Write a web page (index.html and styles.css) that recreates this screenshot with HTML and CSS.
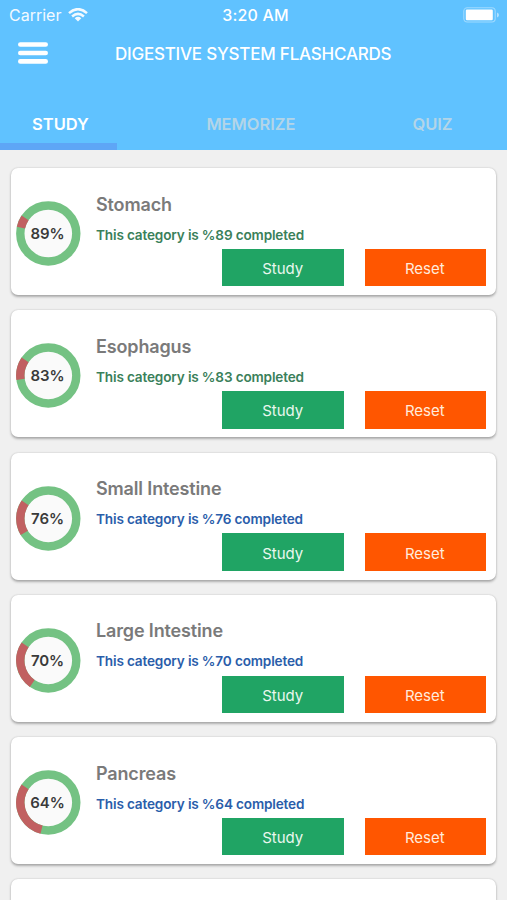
FILE: index.html
```html
<!DOCTYPE html>
<html lang="en">
<head>
<meta charset="utf-8">
<title>Digestive System Flashcards</title>
<link rel="stylesheet" href="styles.css">
</head>
<body>
<header class="header">
  <div class="status">
    <div class="carrier"><span>Carrier</span>
      <svg class="wifi" width="20" height="14" viewBox="0 0 20 14"><g fill="none" stroke="#fff" stroke-width="2.5"><path d="M1 5.1Q10-2.8 19 5.1"/><path d="M4.1 8.5Q10 3.2 15.9 8.5"/></g><path d="M6.7 10.2Q10 7.3 13.3 10.2L10 13.5Z" fill="#fff"/></svg>
    </div>
    <span class="time">3:20 AM</span>
    <svg class="battery" width="37" height="16" viewBox="0 0 37 16"><rect x=".8" y=".8" width="31.4" height="14.2" rx="3.4" fill="none" stroke="#fff" stroke-opacity=".4" stroke-width="1.1"/><rect x="2.8" y="2.6" width="27" height="10.6" rx="1.2" fill="#fff"/><path d="M34 5.5q2 .7 2 2.5t-2 2.5Z" fill="#fff" fill-opacity=".5"/></svg>
  </div>
  <div class="titlebar">
    <svg class="menu" width="30" height="22" viewBox="0 0 30 22"><g stroke="#fff" stroke-width="4.6" stroke-linecap="round"><path d="M2.3 2.5H27.7M2.3 11H27.7M2.3 19.4H27.7"/></g></svg>
    <h1 class="title">DIGESTIVE SYSTEM FLASHCARDS</h1>
  </div>
  <nav class="tabs">
    <span class="tab active">STUDY</span>
    <span class="tab middle">MEMORIZE</span>
    <span class="tab last">QUIZ</span>
  </nav>
</header>
<main class="list" id="list"></main>
<script src="app.js"></script>
</body>
</html>
```
FILE: styles.css
```css
* { box-sizing: border-box; }
body {
  margin: 0;
  height: 900px;
  overflow: hidden;
  background: #f0f0f0;
  font-family: Inter, "Liberation Sans", sans-serif;
}
.header {
  height: 150px;
  background: #60c2ff;
  color: #fff;
  display: flex;
  flex-direction: column;
}
.status {
  height: 30px;
  padding: 0 7px 0 9px;
  display: grid;
  grid-template-columns: 1fr auto 1fr;
  align-items: center;
  font-size: 16px;
  line-height: 30px;
}
.carrier { display: flex; align-items: center; gap: 7px; opacity: .92; }
.wifi { margin-top: -1px; }
.time { font-weight: 500; letter-spacing: .2px; margin-left: 2px; }
.battery { justify-self: end; }
.titlebar {
  height: 46px;
  padding-left: 18px;
  display: flex;
  align-items: center;
}
.title {
  margin: 1px 0 0 67px;
  font-size: 17px;
  line-height: 46px;
  font-weight: 500;
  letter-spacing: -.22px;
}
.tabs {
  flex: 1;
  display: grid;
  grid-template-columns: 117px 268px 95px;
  text-align: center;
  font-size: 16.5px;
  font-weight: 600;
  letter-spacing: 0;
  padding-top: 21px;
}
.tab { line-height: 54px; color: #b3d5e8; height: 53px; }
.active { color: #fff; border-bottom: 7px solid #5ea6f6; padding-left: 4px; }
.list {
  height: 750px;
  overflow: hidden;
  padding: 18px 11px 0;
  display: flex;
  flex-direction: column;
  gap: 15.25px;
}
.card {
  flex: none;
  height: 127px;
  background: #fff;
  border-radius: 7px;
  box-shadow: 0 1.5px 2.5px 0 rgba(0,0,0,.28), 0 0 2px rgba(0,0,0,.12);
  padding: 0 10px 0 5px;
  display: grid;
  grid-template-columns: 80px 1fr;
  align-items: center;
}
.card.partial { height: 21px; border-radius: 7px 7px 0 0; }
.ring { display: block; margin-top: 4px; }
.percent { font-size: 15px; font-weight: 600; letter-spacing: -.1px; fill: #3a3a3a; }
.info { height: 127px; padding-top: 24.6px; }
.name {
  margin: 0;
  font-size: 18px;
  line-height: 24px;
  font-weight: 600;
  letter-spacing: -.15px;
  color: #7a7a7a;
}
.note {
  margin: 8px 0 0;
  font-size: 13.6px;
  line-height: 20px;
  font-weight: 600;
  letter-spacing: -.16px;
  color: #3a805a;
}
.note.blue { color: #2a5daa; }
.actions {
  margin-top: 4.4px;
  display: flex;
  justify-content: flex-end;
  gap: 21px;
}
.btn {
  width: 121.5px;
  height: 37.5px;
  border: 0;
  padding: 2px 0 0;
  font: 400 15px Inter, sans-serif;
  color: #e9f7ee;
  background: #20a464;
}
.btn.reset { background: #ff5600; color: #ffebdc; padding-right: 1px; }
```
FILE: app.js
```js
const cards = [
  { name: 'Stomach', percent: 89, start: 282 },
  { name: 'Esophagus', percent: 83, start: 262 },
  { name: 'Small Intestine', percent: 76, start: 239, blue: true },
  { name: 'Large Intestine', percent: 70, start: 215, blue: true },
  { name: 'Pancreas', percent: 64, start: 194, blue: true }
];
const arcEnd = 304;

document.getElementById('list').innerHTML = cards.map(c => `
  <article class="card">
    <svg class="ring" width="65" height="65" viewBox="0 0 65 65">
      <circle cx="32.3" cy="32.5" r="28" fill="#fafafa" stroke="#74c283" stroke-width="8.4"/>
      <circle cx="32.3" cy="32.5" r="28" fill="none" stroke="#c16061" stroke-width="8.4" pathLength="360"
        stroke-dasharray="${arcEnd - c.start} 360" transform="rotate(${c.start - 90} 32.3 32.5)"/>
      <text class="percent" x="31.5" y="37.9" text-anchor="middle">${c.percent}%</text>
    </svg>
    <div class="info">
      <h2 class="name">${c.name}</h2>
      <p class="note${c.blue ? ' blue' : ''}">This category is %${c.percent} completed</p>
      <div class="actions"><button class="btn">Study</button><button class="btn reset">Reset</button></div>
    </div>
  </article>`).join('') + '<article class="card partial"></article>';
```
